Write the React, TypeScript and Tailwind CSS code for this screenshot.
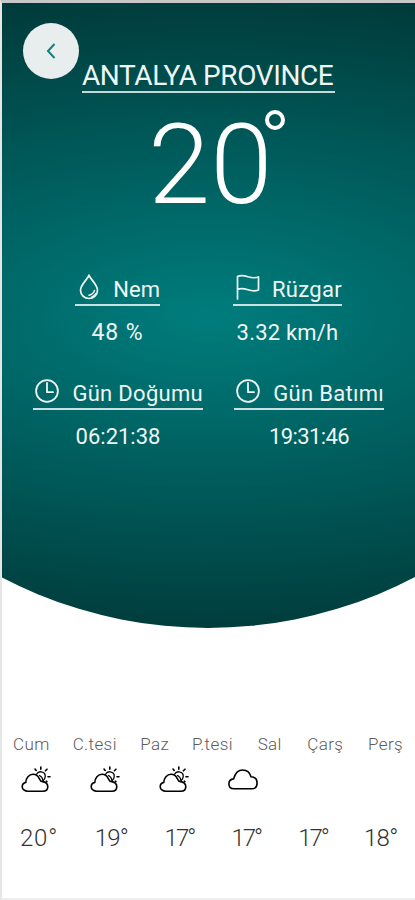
import type { ReactNode } from "react";

const DropIcon = () => (
  <svg className="w-[20px] h-[26px]" viewBox="0 0 20 26" fill="none" stroke="currentColor" strokeWidth="1.7" strokeLinecap="round">
    <path d="M10 1.500C7.500 6.300 1.500 11 1.500 16.300a8.500 8.200 0 0 0 17 0C18.500 11 12.500 6.300 10 1.500Z" />
    <path d="M15.500 16.500c-.8 2.600-2.500 4-5.500 4.800" strokeWidth="1.4" />
    <path d="M17 19.200c-1.200 2-2.500 3.100-4.500 3.900" strokeWidth="1.2" />
  </svg>
);

const FlagIcon = () => (
  <svg className="w-[24px] h-[26px]" viewBox="0 0 24 26" fill="none" stroke="currentColor" strokeWidth="1.7" strokeLinecap="round" strokeLinejoin="round">
    <path d="M1.500 25V2.500c3-1.500 6.500-1 10.500.3 4 1.200 7.500 1.300 10.500.2v13c-3 1.200-6.500 1.100-10.500-.2-4-1.200-7.500-1.700-10.500-.3" />
  </svg>
);

const ClockIcon = () => (
  <svg className="w-[24px] h-[24px]" viewBox="0 0 24 24" fill="none" stroke="currentColor" strokeWidth="1.8" strokeLinecap="round" strokeLinejoin="round">
    <circle cx="12" cy="12" r="10.900" />
    <path d="M12 4v9.200h6" />
  </svg>
);

const PartlyCloudyIcon = () => (
  <svg className="w-[30px] h-[27px]" viewBox="0 0 30 27" fill="none" stroke="currentColor" strokeWidth="1.6" strokeLinecap="round" strokeLinejoin="round">
    <path d="M7 25.300C3.700 25.300 1.200 23.300 1.200 20.700c0-2.300 1.300-3.800 3.600-4.300C4.900 11.900 8 8.300 12 8.300c3 0 5.200 1.700 6.300 4.400l1.500 2.400c4.200.6 7 2.300 7 5.400 0 3-2 4.800-5 4.800Z" />
    <path d="M15.500 8.300c1.200-2.100 3-2.800 4.800-2.500 2.600.4 4.200 2.400 3.900 5-.1 1.500-.8 2.700-2 3.600" strokeWidth="1.3" />
    <path d="M18.500 9.500c2 1 3.200 2.800 3.500 5" strokeWidth="1.3" />
    <path d="M19.800 1v2.200M14 3l1.200 1.500M26 3.200l-1.600 1.600M27 10.700h2M25.300 15.200l.6.500" />
  </svg>
);

const CloudyIcon = () => (
  <svg className="w-[30px] h-[27px]" viewBox="0 0 30 27" fill="none" stroke="currentColor" strokeWidth="1.6" strokeLinejoin="round">
    <path d="M6 22.800c-3.100 0-5.100-2-5.100-4.900 0-2.800 1.700-4.700 4.700-5C7.200 7 10.600 4 14.700 4c4.300 0 7.100 2.500 8.300 6.700 3.600.3 6.100 2.700 6.100 6.200 0 3.600-2.100 5.900-5.500 5.900Z" />
  </svg>
);

const days = [
  { name: "Cum", width: "w-[37px]" },
  { name: "C.tesi", width: "w-[45px]" },
  { name: "Paz", width: "w-[29px]" },
  { name: "P.tesi", width: "w-[43px]" },
  { name: "Sal", width: "w-[27px]" },
  { name: "Çarş", width: "w-[38px]" },
  { name: "Perş", width: "w-[37px]" },
];

const temps = [
  { value: 20, width: "w-[38px]", spacing: "tracking-[0.8px]" },
  { value: 19, width: "w-[33px]", spacing: "tracking-[-0.9px]" },
  { value: 17, width: "w-[30px]", spacing: "tracking-[-2px]" },
  { value: 17, width: "w-[30px]", spacing: "tracking-[-2px]" },
  { value: 17, width: "w-[29px]", spacing: "tracking-[-2px]" },
  { value: 18, width: "w-[33px]", spacing: "tracking-[-0.7px]" },
];

type DetailProps = {
  icon: ReactNode;
  label: string;
  value: string;
  width: string;
  padding: string;
  labelSpacing?: string;
  valueSpacing?: string;
};

const Detail = ({ icon, label, value, width, padding, labelSpacing = "", valueSpacing = "" }: DetailProps) => (
  <div className={`flex flex-col items-center ${width}`}>
    <div className={`flex h-[34px] w-full items-center justify-between border-b-2 border-[#c9e2e1] pb-0.5 ${padding}`}>
      {icon}
      <span className={`whitespace-nowrap pt-1 ${labelSpacing}`}>{label}</span>
    </div>
    <div className={`mt-[11px] h-[31px] whitespace-nowrap leading-8 ${valueSpacing}`}>{value}</div>
  </div>
);

const App = () => {
  return (
    <div className="h-[900px] w-[415px] overflow-hidden border-t-[3px] border-b-2 border-l-2 border-t-[#c8c8c8] border-b-[#eeeeee] border-l-[#e6e6e6] bg-white font-['Roboto',sans-serif]">
      {/* Current weather */}
      <section className="flex h-[625px] flex-col bg-[radial-gradient(ellipse_880px_405px_at_50%_50%,#007d7d_0%,#002a2a_100%)] text-[#eef6f5] [clip-path:circle(445px_at_206px_180px)]">
        <header className="flex h-[98px] pl-[21px]">
          <button className="mt-5 flex size-14 shrink-0 items-center justify-center rounded-full bg-[#e8eeed] text-[#168080]">
            <svg className="h-[16px] w-[10px]" viewBox="0 0 10 16" fill="none" stroke="currentColor" strokeWidth="2">
              <path d="M8.500 1 2 8l6.500 7" />
            </svg>
          </button>
          <h1 className="ml-[3px] mt-[52px] h-[38px] w-[253px] whitespace-nowrap border-b-2 border-[#c4d8d7] text-[28px] leading-[41px] tracking-[-0.4px]">
            ANTALYA PROVINCE
          </h1>
        </header>

        <div className="flex h-[171px] pl-[146px]">
          <span className="text-[112px] font-light leading-[127px] text-white">20</span>
          <span className="-ml-[7px] mt-[9px] size-[20px] rounded-full border-4 border-white" />
        </div>

        <div className="flex gap-[73px] pl-[73px] text-[22px]">
          <Detail icon={<DropIcon />} label="Nem" value="48 %" width="w-[85px]" padding="pl-1" valueSpacing="text-[23px] tracking-[0.9px]" />
          <Detail icon={<FlagIcon />} label="Rüzgar" value="3.32 km/h" width="w-[109px]" padding="pl-[3px]" labelSpacing="tracking-[0.3px]" valueSpacing="tracking-[0.2px]" />
        </div>
        <div className="mt-7 flex gap-[31px] pl-[31px] text-[22px]">
          <Detail icon={<ClockIcon />} label="Gün Doğumu" value="06:21:38" width="w-[170px]" padding="pl-[2px]" labelSpacing="tracking-[0.3px]" />
          <Detail icon={<ClockIcon />} label="Gün Batımı" value="19:31:46" width="w-[150px]" padding="pl-[2px]" labelSpacing="tracking-[0.3px]" valueSpacing="tracking-[-0.6px]" />
        </div>
      </section>

      {/* Weekly forecast */}
      <section className="pt-[104px]">
        <div className="flex h-6 justify-between pl-[11px] pr-[10px] text-[17px] leading-6 text-[#5c5c5c]">
          {days.map((day, index) => (
            <span key={index} className={`whitespace-nowrap font-light tracking-[0.4px] ${day.width}`}>{day.name}</span>
          ))}
        </div>
        <div className="mt-[10px] flex gap-[39px] pl-[19px] text-black">
          <PartlyCloudyIcon />
          <PartlyCloudyIcon />
          <PartlyCloudyIcon />
          <CloudyIcon />
        </div>
        <div className="mt-[29px] flex justify-between pl-[18px] pr-[18px] text-[24px] font-light leading-8 text-[#333]">
          {temps.map((temp, index) => (
            <span key={index} className={`whitespace-nowrap ${temp.width} ${temp.spacing}`}>{temp.value}°</span>
          ))}
        </div>
      </section>
    </div>
  );
};

export default App;
